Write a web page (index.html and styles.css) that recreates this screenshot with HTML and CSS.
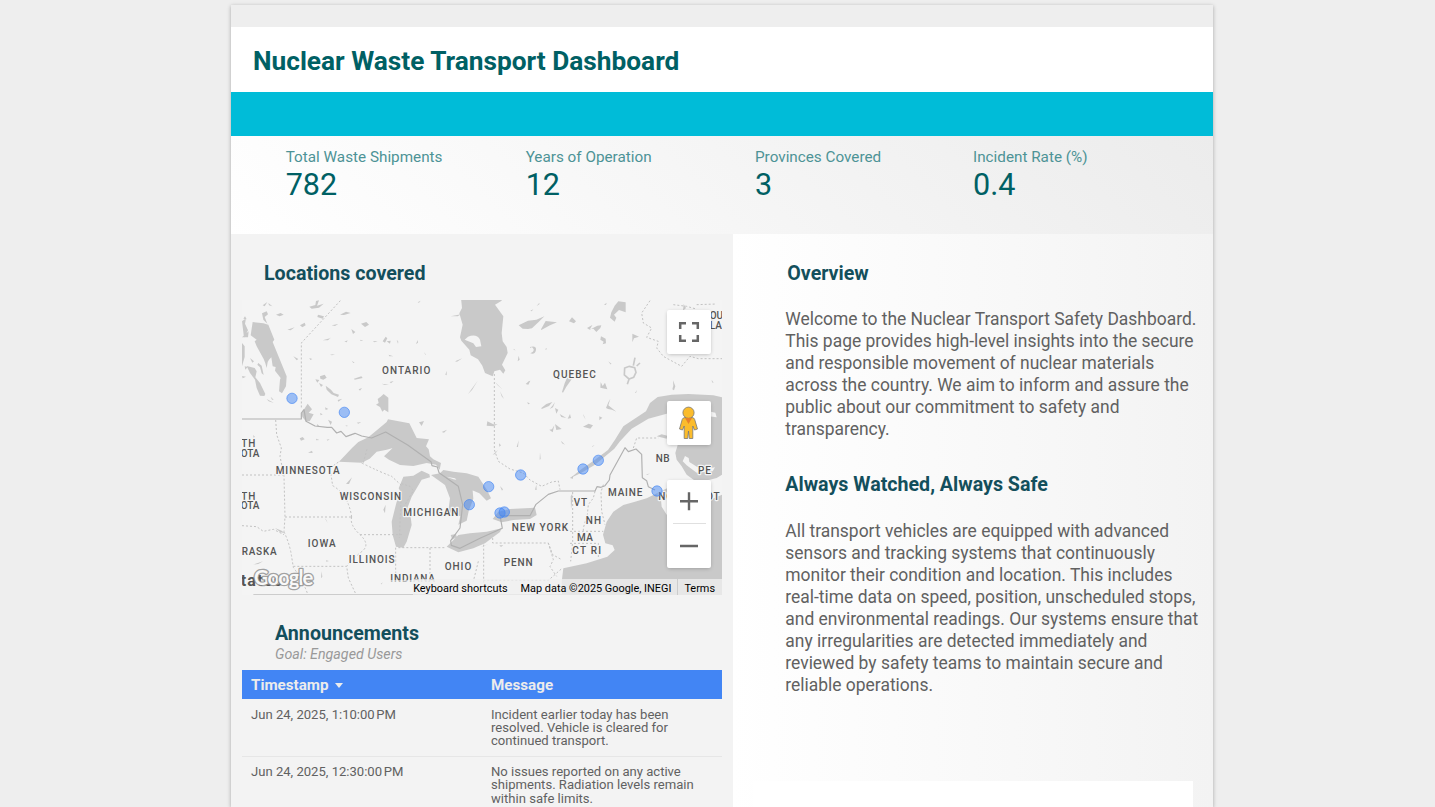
FILE: index.html
```html
<!DOCTYPE html>
<html lang="en">
<head>
<meta charset="utf-8">
<title>Nuclear Waste Transport Dashboard</title>
<link rel="stylesheet" href="styles.css">
</head>
<body>
<main class="report">
  <header class="title-bar"><h1>Nuclear Waste Transport Dashboard</h1></header>
  <div class="accent"></div>
  <section class="kpis">
    <div class="kpi"><div class="kpi-label">Total Waste Shipments</div><div class="kpi-value">782</div></div>
    <div class="kpi"><div class="kpi-label">Years of Operation</div><div class="kpi-value">12</div></div>
    <div class="kpi"><div class="kpi-label">Provinces Covered</div><div class="kpi-value">3</div></div>
    <div class="kpi"><div class="kpi-label">Incident Rate (%)</div><div class="kpi-value">0.4</div></div>
  </section>
  <div class="columns">
    <section class="left">
      <h2 class="locations-title">Locations covered</h2>
      <div class="map">
        <svg class="map-svg" viewBox="6 6 1440 885">
          <rect x="6" y="6" width="1440" height="885" fill="#f4f4f4"/>
          <g class="water">
            <!-- Hudson and James Bay -->
            <path d="M663 0L666 30 658 46 668 80 660 118 664 128 688 155 692 172 714 184 727 203 735 225 758 235 763 220 780 215 790 227 796 217 786 200 803 165 800 147 788 130 785 105 790 55 765 20 785 8V0z"/>
            <path fill="#f4f4f4" d="M674 125L684 116Q710 106 720 125L724 145 708 147 700 136z"/>
            <!-- Lakes Winnipeg and Manitoba -->
            <path d="M38 72L70 76 85 80 103 125 98 132 140 235 138 265 126 286 117 280 120 245 122 240 105 218 107 207 98 205 94 178 87 185 83 192 80 210 76 196 71 183 50 145 44 130 50 125 32 112zM20 204L44 210 50 220 46 238 60 255 76 288 73 294 60 293 50 270 45 245 30 225z"/>
            <!-- Superior -->
            <path d="M297 491L336 450 355 432 385 418 404 402 440 372 444 364 508 376 530 420 567 424 558 445 566 454 570 475 580 484 603 495 599 515 588 500 560 495 520 504 480 501 447 485 432 475 458 450 472 446 440 455 410 461 389 482 365 494z"/>
            <!-- Michigan, Huron, Georgian Bay, Erie, Ontario -->
            <path d="M484 551L490 536 520 533 545 518 568 529 570 538 545 545 530 571 515 596 502 631 512 656 515 681 500 731 490 749 468 746 458 711 455 671 465 631 470 611 484 586 476 571z"/>
            <path d="M573 531L600 526 610 516 640 521 680 526 715 536 741 576 753 601 740 608 718 586 695 576 683 561 674 552 650 546 645 541 620 536 640 544 680 551 698 578 700 602 686 640 680 668 655 680 661 655 625 641 630 601 615 561z"/>
            <path d="M620 746L638 728 655 711 690 706 740 701 785 691 780 702 735 736 700 751 655 763zM758 663L775 641 810 633 885 629 890 651 870 663 820 666 785 673zM637 725L632 711 648 708 650 717z"/>
            <!-- St. Lawrence and the Gulf -->
            <path d="M990 541L1025 513 1065 485 1104 456 1125 425 1150 385 1218 340 1230 315 1253 297 1295 290 1345 288 1420 292 1446 298V532L1430 545 1400 548 1370 552 1340 530 1325 505 1310 485 1306 465 1313 441 1340 400 1320 340 1280 347 1225 362 1175 392 1140 430 1123 452 1065 500 1023 525z"/>
            <path fill="#f4f4f4" d="M1400 338L1426 344 1430 358 1400 354zM1335 474L1346 480 1348 492 1372 507 1400 512 1425 508 1418 520 1370 524 1340 502 1328 490zM1392 550L1430 540 1446 530V550z"/>
            <path d="M1250 415L1265 409 1282 413 1280 422z"/>
            <!-- Atlantic -->
            <path d="M965 851L970 811 1040 796 1102 776 1124 756 1118 742 1096 736 1089 710 1100 671 1120 641 1150 621 1185 611 1220 601 1240 591 1260 581 1290 566 1310 572 1276 592 1263 606 1265 626 1280 650 1400 610 1446 590V891H966z"/>
            <path fill="#f4f4f4" d="M965 803L990 783 1030 774 1048 775 1005 793z"/>
          </g>
          <!-- Smaller lakes -->
          <g class="water">
            <path d="M66 46l14-6 4 9-10 8 8 20-12-12zM108 50l14-5 9 5-12 5zM85 15l12 10-10-3zM142 95l22-7-12 9zM180 82l14-8 3 8-10 6zM208 26l18-5 2-12 9-2-6 16 20-6-14 12-22 3zM234 50l18 5-4 7-16-5zM300 50l18-9 14 4-20 6zM275 82l20-4-10 6zM363 77l16-5 8 8-12 7zM334 93l12 9-7 6zM248 127l22-6 4-3-10 9zM313 131l10-4-3 6zM360 125l10 3-8 1zM398 130l15-1-9 4zM428 130l9-14 5 5-7 13zM440 130l12-2-2 9zM470 125l5 6-1 6zM528 138l5-12 1 8zM552 162l6 8-2 0zM270 170l15-2-9 4zM335 188l9 6-4 1zM446 170l14 5-12 0zM208 180l9 3-6 3zM160 175l15 8-5 4zM240 235l14-5 6 9-10 6-9-3zM226 244l12 2-6 8zM237 255l12 6-6 6zM257 263l16 12 8 10 16 5-3 7-20-8-14-14zM293 306l14-4-12 9zM342 242l22-7 4 5-24 5zM356 274l10-4-6 8zM425 257l22 3-13 1zM449 252l12-3-8 7zM616 230l4-12 0 14zM645 190l22-9-16 10zM684 288l29-40-17 28zM632 55l31-6-10 6zM533 13l9-5-5 6z"/>
            <path d="M422 296l9-8 14 11 0 44-12-8-6 6-7-14-12-7 8-5-3-12zM185 345l18-28 13 17-10 10 15 5-12 21-12-1-10-12zM255 328l10 5-8 3zM240 345l8 4-6 3zM317 382l8 2-7 1zM350 374l14-2-9 5zM232 378l8 9-9-4zM264 365l8 16 4-10zM179 421l9-4 6 7-11 4zM228 422l10 4-9 1zM260 425l9-2-6 5zM537 373l15-4-7 15zM605 402l16-7-9 9zM80 303l22 12-16-5zM40 411l5 6-5 2zM204 464l12-6 2 7zM438 395l14-20 9-6-4 18zM6 70l12-9-3 16 9 20-12 22zM6 118l20-18-2 18zM6 135l8 10 0 32-8 28zM14 205l9 2-7 8zM6 234l12 2-10 5zM30 180l12 10-5 4zM15 55l5 9-10-2zM68 22l14-10-8 13zM92 296l9 9-5 0zM55 195l10 8 6 28-6-5-5-18-8-8z"/>
            <path d="M836 82l28-14 25-3 24-10-18 18-19 18-12 2-16-1zM903 94l14-25 34 4-21 9-26 14zM987 70l9-12 12 12-6 6zM1041 90l16-9-8 14zM1049 95l23-12 12-1-3 8-12 12-9-10-10 1zM1114 43l10-20 11-13 22 3 0 30-20-7-15 14 7 9-5 12-14-12zM1083 115l14 7 1 14-10 3 3-8-10-6zM870 147q20-5 18 9t-17 10q14-6 9-14t-10-1zM857 258l9-8 5-2-6 12zM966 282l8-26 7-17 14 5-16 22-10 18zM1082 252l6 12 7-10 7 20-14-3-7-2zM1177 107l20 9-15 5-5 12zM1299 247l7 18-4 12-5-3 3-11zM1415 245l6 10-5-2zM1185 285l6-9-3 9zM1105 190l10 8-4 1zM833 190l3-17 3 12zM918 150l3 3-5 3zM820 152l7 5-5-1zM904 330l15-12 18-6-10 12-22 9zM929 333l10-12 6-9-6 16zM945 330l10 5-6 12zM959 348l20 12-15-3zM983 362l7-14 3 12zM1029 386l17-9 13 5-8 10zM928 395l10 8 5-21-7 12zM945 378l20 15-16 3zM1098 330l7-17 6-11-6 20 24 19-13-6-12-2zM1078 355l9 4-9 8zM742 370l18 9 13 0-13 6-20-2zM777 436l6 6-5 4zM830 447l6-20-2 20zM963 428l12 12-9-4zM1056 445l8-4-6 5zM1030 348l7 17-6-10zM780 280l12 23-7-8zM765 252l22 22-14-12zM862 312l8 5-6 2zM890 24l8-10 0 5zM871 38l9-4-5 6zM1092 20l8-6-2 7zM1331 18l7 12-9 8z"/>
            <path d="M758 470l16-14-9 12zM900 463l2 20-3 2zM780 564l9 10-3 4zM885 575l4-15 1 16zM990 540l9-6 0 8zM992 595l5-8 0 22-4 24zM1218 530l12-4-8 5zM39 800l30-10-14 8zM318 558l18-20-9 20zM245 820l2 16-4 5zM430 635l7-15-2 26zM254 660l9 15-4-9zM258 787l9 2-8 2zM422 858l6-5-3 6zM105 690l20 8 9 8-14-4zM720 748l26-10-16 7zM778 742l12 0-7 5z"/>
            <path class="ring" d="M1154 210l14-5 16 4 4 14-7 15-14 5-14-12zM1180 203l5-24M1190 204l10-9M1167 244l-5 15"/>
          </g>
          <g class="province">
            <path d="M301 8L184 135V330M107 366L110 410 124 450 120 475 132 535 135 657 132 701M6 531H130M135 657H335M335 657Q325 590 278 563L270 510 297 491M365 495Q420 522 455 535L484 562M335 657Q328 680 360 710T366 760Q335 785 320 805L325 840 346 885M360 710H488M484 586L478 720M467 749V845M475 749H615M570 750V840M160 805H320M132 701Q150 740 155 777L160 808Q190 850 204 891M6 683L50 686 70 700 100 694 132 710M484 557L510 565 520 578 485 637M370 494L382 450M763 228V455L775 490 810 513 850 525 870 546 905 565 935 552 955 549 960 575M758 720V735H925L938 770 965 785M731 740V880M730 847H925L965 812M998 582V730L992 790M1065 580L1060 600 1045 620 1042 650 1030 690V705M1090 560L1083 582 1085 640 1095 680M990 700H1090M990 736H1075V780M1180 450L1190 420H1255M1230 8L1205 45 1210 75 1235 90 1220 118 1255 130 1250 150 1270 175 1325 205 1350 175 1375 182H1446M1370 20L1430 18M1300 20L1340 25 1365 32M925 735L940 785 930 806 950 835M715 790L700 850"/>
          </g>
          <path class="country" d="M6 363H184V345L192 335 198 370 225 384 262 388 275 388 290 405 303 400 318 416 345 406 365 414 395 420 437 402 503 441 573 491 576 503 592 507 597 524 655 565 668 620 660 690 632 728 634 742 660 751 720 721 787 691 780 653H870L888 619 925 589 955 579H1065L1071 566 1083 568 1095 563 1108 546 1110 531 1155 449 1165 461 1188 453 1205 469 1207 539 1220 548 1225 566 1245 576"/>
          <g class="labels">
            <text x="426" y="228" textLength="145">ONTARIO</text>
            <text x="939" y="239" textLength="128">QUEBEC</text>
            <text x="1409" y="63">OU</text>
            <text x="1409" y="93">LA</text>
            <text x="4" y="448" textLength="42">TH</text>
            <text x="2" y="478" textLength="56">OTA</text>
            <text x="107" y="529" textLength="192">MINNESOTA</text>
            <text x="299" y="607" textLength="184">WISCONSIN</text>
            <text x="490" y="655" textLength="165">MICHIGAN</text>
            <text x="4" y="605" textLength="42">TH</text>
            <text x="2" y="634" textLength="56">OTA</text>
            <text x="5" y="771" textLength="105">RASKA</text>
            <text x="203" y="747" textLength="84">IOWA</text>
            <text x="326" y="796" textLength="138">ILLINOIS</text>
            <text x="451" y="853" textLength="134">INDIANA</text>
            <text x="614" y="815" textLength="80">OHIO</text>
            <text x="791" y="804" textLength="87">PENN</text>
            <text x="815" y="700" textLength="169">NEW YORK</text>
            <text x="1001" y="624" textLength="40">VT</text>
            <text x="1037" y="677" textLength="46">NH</text>
            <text x="1011" y="729" textLength="48">MA</text>
            <text x="997" y="768" textLength="86">CT RI</text>
            <text x="1104" y="593" textLength="103">MAINE</text>
            <text x="1247" y="492" textLength="42">NB</text>
            <text x="1374" y="529" textLength="39">PE</text>
            <text x="1255" y="607" textLength="184">NOVA SCOT</text>
            <text class="nation" x="2" y="863" textLength="124">tates</text>
          </g>
          <rect x="445" y="846" width="145" height="10" fill="#f4f4f4" opacity=".6"/>
          <text class="google" x="42" y="862" textLength="178">Google</text>
          <path d="M40 889.500H1300" stroke="#ccc" stroke-width="3"/>
          <g class="pins">
            <circle cx="156" cy="301" r="15.5"/><circle cx="313" cy="343" r="15.5"/>
            <circle cx="842" cy="531" r="15.5"/><circle cx="1029" cy="513" r="15.5"/>
            <circle cx="1075" cy="487" r="15.5"/><circle cx="746" cy="566" r="15.5"/>
            <circle cx="688" cy="620" r="15.5"/><circle cx="780" cy="645" r="15.5"/>
            <circle cx="793" cy="642" r="15.5"/><circle cx="1251" cy="579" r="15.5"/>
          </g>
        </svg>
        <div class="map-legal"><span>Keyboard shortcuts</span><span class="data">Map data ©2025 Google, INEGI</span><span class="terms">Terms</span></div>
        <div class="map-controls">
          <div class="control"><svg width="44" height="44" viewBox="0 0 44 44"><path fill="none" stroke="#666" stroke-width="2.5" d="M13.2 19V13.2H19M25 13.2h5.8V19M30.8 25v5.8H25M19 30.8h-5.800V25"/></svg></div>
          <div class="control pegman"><svg width="44" height="44" viewBox="0 0 44 44"><g fill="#fbbc2c" stroke="#777" stroke-width=".8"><path d="M15.200 18.500Q16 16.500 18 16.500H25Q27 16.500 27.700 18.500L30.500 28 27.500 29 25.800 25V37.500H22.300L21.500 30 20.700 37.500H17.200V25L15.500 29 12.500 28z"/><circle cx="21.500" cy="11.700" r="5.600"/></g><path fill="#e8812b" d="M18 17h7l-3.500 6z"/></svg></div>
          <div class="control zoom"><svg width="44" height="88" viewBox="0 0 44 88"><path stroke="#666" stroke-width="2.400" d="M13 21.200h18M22 12.200v18M13 66h18"/><path stroke="#e0e0e0" d="M6 43.500h33"/></svg></div>
        </div>
      </div>
      <h2 class="announce-title">Announcements</h2>
      <p class="goal">Goal: Engaged Users</p>
      <div class="table">
        <div class="row head"><div>Timestamp<span class="caret"></span></div><div>Message</div></div>
        <div class="row"><div>Jun 24, 2025, 1:10:00&#8239;PM</div><div>Incident earlier today has been<br>resolved. Vehicle is cleared for<br>continued transport.</div></div>
        <div class="row divided"><div>Jun 24, 2025, 12:30:00&#8239;PM</div><div>No issues reported on any active<br>shipments. Radiation levels remain<br>within safe limits.</div></div>
      </div>
    </section>
    <section class="right">
      <h2 class="overview-title">Overview</h2>
      <p>Welcome to the Nuclear Transport Safety Dashboard.<br>This page provides high-level insights into the secure<br>and responsible movement of nuclear materials<br>across the country. We aim to inform and assure the<br>public about our commitment to safety and<br>transparency.</p>
      <h2 class="safe-title">Always Watched, Always Safe</h2>
      <p>All transport vehicles are equipped with advanced<br>sensors and tracking systems that continuously<br>monitor their condition and location. This includes<br>real-time data on speed, position, unscheduled stops,<br>and environmental readings. Our systems ensure that<br>any irregularities are detected immediately and<br>reviewed by safety teams to maintain secure and<br>reliable operations.</p>
      <div class="panel"></div>
    </section>
  </div>
</main>
</body>
</html>
```
FILE: styles.css
```css
* { box-sizing: border-box; }
html, body { height: 100%; }
body { margin: 0; background: #eee; font-family: Roboto, "Liberation Sans", sans-serif; overflow: hidden; padding: 5px 0 0 231px; }
h1, h2, p { margin: 0; white-space: nowrap; }
.report { width: 982px; height: 100%; overflow: hidden; padding-top: 22px; background: #eee; box-shadow: 0 1px 4px rgba(0,0,0,.3); }
.title-bar { height: 65px; background: #fff; padding: 18px 22px 0; }
h1 { font-size: 26.25px; line-height: 32px; font-weight: 700; color: #006064; }
.accent { height: 44px; background: #00bcd8; }
.kpis { height: 98px; padding: 12px 0 0 54.7px; display: grid; grid-template-columns: 240px 229.3px 218px 1fr; background: linear-gradient(45deg, #fff, #ececec); }
.kpi-label { font-size: 15.27px; line-height: 18px; color: #4d9396; }
.kpi-value { font-size: 30.55px; line-height: 36px; margin-top: 1px; color: #006064; }
.columns { display: grid; grid-template-columns: 502px 480px; height: 573px; overflow: hidden; }
.left { background: #f3f3f3; padding: 0 11px; }
h2 { font-size: 19.64px; line-height: 24px; font-weight: 700; color: #134f5c; }
.locations-title { padding: 28px 0 0 22px; height: 66px; }
.map { position: relative; height: 295px; overflow: hidden; }
.map-svg { display: block; width: 480px; height: 295px; }
.water { fill: #c9c9c9; }
.ring { fill: none; stroke: #c9c9c9; stroke-width: 5; }
.province { fill: none; stroke: #c2c2c2; stroke-width: 3; stroke-dasharray: 6 6; }
.country { fill: none; stroke: #b0b0b0; stroke-width: 3.5; stroke-linejoin: round; }
.labels { font-size: 30px; font-weight: 500; fill: #555; stroke: #f4f4f4; stroke-width: 7px; paint-order: stroke; stroke-linejoin: round; }
.nation { font-size: 48px; font-weight: 700; fill: #555; }
.google { font-family: Lato, sans-serif; font-size: 61px; font-weight: 700; fill: #f8f8f8; stroke: rgba(140,140,140,.8); stroke-width: 8px; paint-order: stroke; stroke-linejoin: round; }
.pins { fill: rgba(66,133,244,.5); stroke: rgba(66,133,244,.65); stroke-width: 3; }
.map-legal { position: absolute; right: 0; bottom: 0; height: 16px; display: flex; font-size: 10.9px; line-height: 19px; color: #000; background: rgba(240,240,240,.75); white-space: nowrap; }
.data { margin-left: 13px; padding-right: 6px; }
.terms { border-left: 1px solid #ccc; padding: 0 7px 0 6px; }
.map-controls { position: absolute; top: 10px; right: 11px; width: 44px; display: flex; flex-direction: column; }
.control { width: 44px; background: #fff; height: 44px; box-shadow: 0 1px 4px -1px rgba(0,0,0,.3); border-radius: 2px; }
.control svg { display: block; }
.pegman { margin-top: 47px; }
.zoom { height: 88px; margin-top: 35px; }
.announce-title { padding: 27px 0 0 33px; }
.goal { padding-left: 33px; height: 24px; font-size: 14.25px; line-height: 16px; font-style: italic; color: #999; }
.row { display: grid; grid-template-columns: 240px 240px; padding: 9px 0 0 9px; height: 57.2px; font-size: 13.09px; line-height: 13.2px; color: #616161; }
.divided { border-top: 1px solid #e6e6e6; padding-top: 8px; }
.head { height: 29px; padding-top: 6px; font-size: 15.2px; line-height: 18px; font-weight: 700; color: #ececec; background: #4285f4; }
.caret { display: inline-block; margin-left: 6px; vertical-align: 2px; border: 4px solid transparent; border-top: 5px solid #ececec; border-bottom: 0; }
.right { padding: 28px 20px 0 52.3px; background: linear-gradient(90deg, #fff, #f3f3f3); }
.overview-title { padding-left: 2px; height: 46px; }
.right p { font-size: 17.46px; line-height: 22px; color: #616161; }
.safe-title { margin: 34px 0 24px; line-height: 22px; }
.panel { height: 100px; margin: 85px 0 0 -32px; background: #fff; }
```
